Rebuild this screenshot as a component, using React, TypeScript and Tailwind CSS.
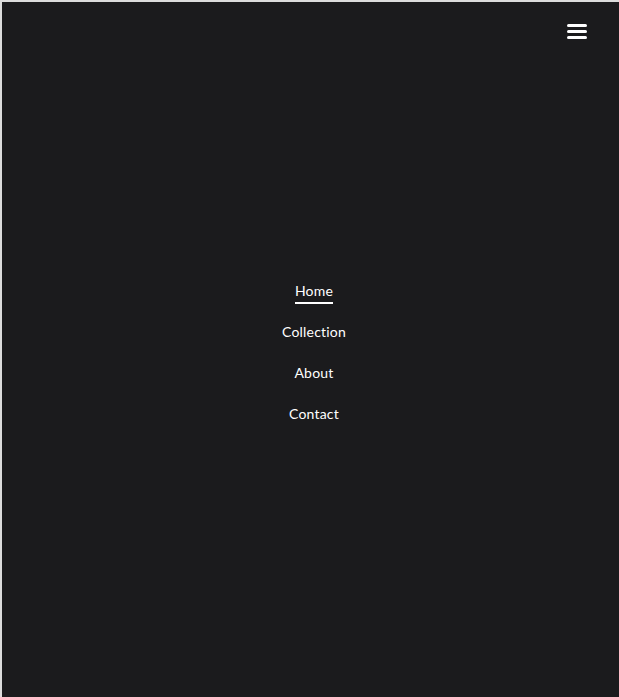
export default function App() {
  const links = ["Home", "Collection", "About", "Contact"];

  return (
    <div className="w-[619px] h-[697px] bg-[#1b1b1d] border-t-2 border-l-2 border-[#dcdcdc] relative font-['Lato',sans-serif]">
      {/* menu toggle */}
      <button className="absolute top-[22px] right-[32px] flex flex-col gap-[3px] p-0">
        <span className="block w-[20px] h-[3px] rounded-full bg-white"></span>
        <span className="block w-[20px] h-[3px] rounded-full bg-white"></span>
        <span className="block w-[20px] h-[3px] rounded-full bg-white"></span>
      </button>

      <nav className="h-full flex items-center justify-center pl-[7px]">
        <ul className="flex flex-col items-center gap-[18px] pt-[9px]">
          {links.map((link, i) => (
            <li key={link}>
              <a
                href="#"
                className={`block text-[14px] leading-5 tracking-[0.2px] text-white pb-[1px] border-b-2 ${
                  i === 0 ? "border-white" : "border-transparent"
                }`}
              >
                {link}
              </a>
            </li>
          ))}
        </ul>
      </nav>
    </div>
  );
}
